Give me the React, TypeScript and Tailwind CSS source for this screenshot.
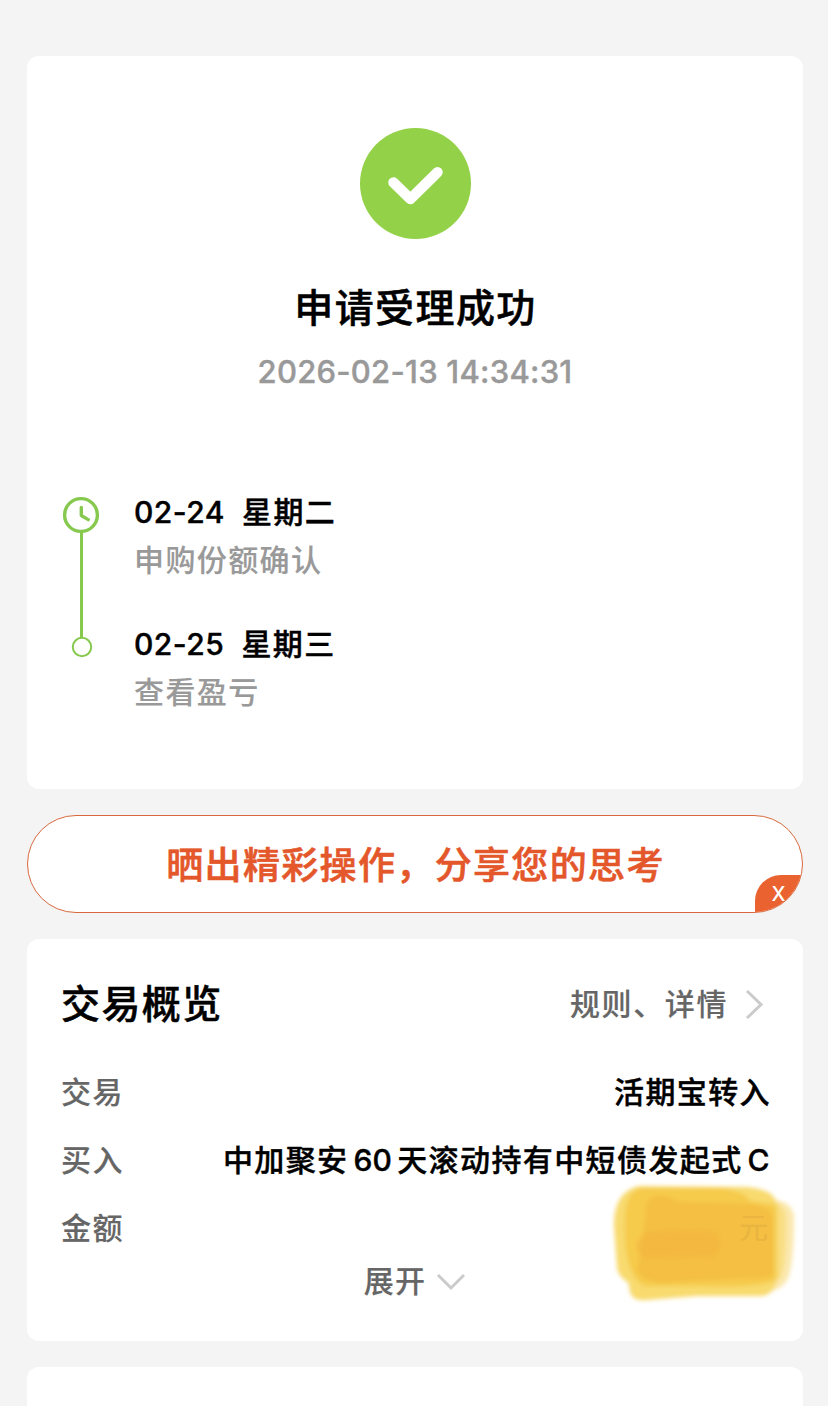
import type { ReactNode } from "react";

const steps = [
  { date: "02-24", day: "星期二", note: "申购份额确认" },
  { date: "02-25", day: "星期三", note: "查看盈亏" },
];

function SuccessIcon() {
  return (
    <svg className="block h-[112px] w-[112px]" viewBox="0 0 112 112" fill="none">
      <circle cx="56.5" cy="56.5" r="55.5" fill="#93d248" />
      <path d="M34.5 55.5 L51.4 72 L78.5 45.2" stroke="#fff" strokeWidth="10.5" strokeLinecap="round" strokeLinejoin="round" />
    </svg>
  );
}

function TimelineRail() {
  return (
    <svg className="block h-[164px] w-[40px] shrink-0" viewBox="0 0 40 164" fill="none" stroke="#86c94e">
      <circle cx="20" cy="20" r="16.4" strokeWidth="3.4" />
      <path d="M20.3 12.5 V20.5 L27.2 24.6" strokeWidth="3.4" strokeLinecap="round" strokeLinejoin="round" />
      <path d="M20.5 37 V143" strokeWidth="3" />
      <circle cx="21" cy="152" r="9.2" strokeWidth="2" />
    </svg>
  );
}

function Row({ label, children }: { label: string; children?: ReactNode }) {
  return (
    <div className="-mr-[2px] flex h-[68px] items-center justify-between text-[30px] tracking-[1.4px]">
      <span className="text-[#666]">{label}</span>
      <span className="text-black">{children}</span>
    </div>
  );
}

function Scribble() {
  return (
    <svg className="absolute top-[238px] left-[575px] h-[140px] w-[210px]" viewBox="0 0 210 140">
      <defs>
        <filter id="soft" x="-10%" y="-10%" width="120%" height="120%">
          <feGaussianBlur stdDeviation="2.2" />
        </filter>
      </defs>
      <g filter="url(#soft)">
        <path d="M158 23 Q188 20 192 38 Q192 94 184 105 Q176 116 158 114Z" fill="#fbe8ae" />
        <path d="M158 22 Q181 22 184 38 Q185 90 178 101 Q170 112 158 112Z" fill="#f9df86" />
        <path d="M25 97 L28 115 Q31 125 45 123 L95 119 L160 119 Q175 117 174 98Z" fill="#f8da6e" />
        <path d="M37 9 L146 10 Q172 13 174 25 L177 35 V100 Q169 111 145 111 L44 111 Q18 107 15 91 L12 50 Q11 15 37 9Z" fill="#f8da6e" />
        <path d="M40 11 L118 11 Q144 15 148 24 L174 28 V103 Q158 111 100 109 L43 109 Q22 99 23 48 Q22 14 40 11Z" fill="#f6ca4b" />
        <path d="M45 24 Q58 13 76 25 L145 27 Q170 28 171 42 V96 Q171 102 149 101 L72 105 Q46 109 35 94 Q42 60 45 24Z" fill="#f4bf42" />
        <path d="M43 56 Q82 51 114 55 Q123 68 112 79 L43 81 Q26 70 43 56Z" fill="#f3b43f" opacity=".6" />
      </g>
      <text x="137" y="62" fontSize="29" fill="#e9b440" className="font-normal">元</text>
    </svg>
  );
}

export default function App() {
  return (
    <div className="flex h-[1406px] w-[828px] flex-col gap-[26px] overflow-hidden bg-[#f4f4f4] pt-[56px] pr-[25px] pl-[27px] font-['Inter','Noto_Sans_CJK_SC',sans-serif] font-medium whitespace-nowrap [-webkit-text-stroke:0.15px_currentColor]">
      <section className="flex h-[733px] shrink-0 flex-col rounded-[12px] bg-white">
        <div className="flex flex-col items-center pt-[71px]">
          <SuccessIcon />
          <h1 className="mt-[39px] h-[60px] pl-[1px] text-[39px] leading-[60px] font-medium tracking-[1.4px] text-black [-webkit-text-stroke:0.5px_currentColor]">申请受理成功</h1>
          <p className="mt-[11px] h-[46px] text-[31px] leading-[46px] tracking-[0.25px] text-[#999] [-webkit-text-stroke:0.4px_currentColor]">2026-02-13 14:34:31</p>
        </div>
        <div className="mt-[84px] flex pt-[16px] pl-[34px]">
          <TimelineRail />
          <ol className="ml-[33px] flex flex-col gap-[36px] text-[30px] tracking-[1.4px]">
            {steps.map((s) => (
              <li key={s.date} className="flex flex-col leading-[48px]">
                <div className="flex h-[48px] -translate-y-[7px] gap-[17px] text-black [-webkit-text-stroke:0.4px_currentColor]">
                  <span className="tracking-[0.5px]">{s.date}</span>
                  <span>{s.day}</span>
                </div>
                <span className="h-[48px] -translate-y-[7px] text-[#999]">{s.note}</span>
              </li>
            ))}
          </ol>
        </div>
      </section>

      <button className="relative flex h-[98px] shrink-0 items-center justify-center overflow-hidden rounded-full border border-[#d9683c] bg-white text-[37px] font-medium tracking-[1.35px] text-[#e4572b] [-webkit-text-stroke:0.6px_currentColor]">
        <span className="pt-[3px] pl-[1px]">晒出精彩操作，分享您的思考</span>
        <span className="absolute right-0 bottom-0 flex h-[37px] w-[47px] items-center justify-center rounded-tl-[26px] bg-[#ea622f] pt-[1px] text-[20px] tracking-normal text-white [-webkit-text-stroke:0px]">X</span>
      </button>

      <section className="relative h-[402px] shrink-0 rounded-[12px] bg-white px-[34px] pt-[35px]">
        <header className="flex h-[60px] items-center justify-between">
          <h2 className="text-[39px] font-medium tracking-[1.4px] text-black [-webkit-text-stroke:0.5px_currentColor]">交易概览</h2>
          <a className="flex items-center pr-[3px] text-[30px] tracking-[1.6px] text-[#666]">
            规则、详情
            <svg className="ml-[16px] h-[32px] w-[22px]" viewBox="0 0 22 32" fill="none">
              <path d="M3 3 L17 16.5 L3 30" stroke="#cbcbcb" strokeWidth="3" />
            </svg>
          </a>
        </header>
        <div className="pt-[24px]">
          <Row label="交易"><span className="[-webkit-text-stroke:0.4px_currentColor]">活期宝转入</span></Row>
          <Row label="买入">
            <span className="flex [-webkit-text-stroke:0.4px_currentColor]"><span>中加聚安</span><span className="mr-[5px] ml-[5px] tracking-[0.2px]">60</span><span>天滚动持有中短债发起式</span><span className="ml-[5px]">C</span></span>
          </Row>
          <Row label="金额" />
        </div>
        <div className="-mt-px flex h-[40px] items-center justify-center text-[30px] tracking-[1.3px] text-[#666]">
          展开
          <svg className="mt-[2px] ml-[10px] h-[20px] w-[30px]" viewBox="0 0 30 20" fill="none">
            <path d="M2 3 L15 16 L28 3" stroke="#cbcbcb" strokeWidth="3" />
          </svg>
        </div>
        <Scribble />
      </section>

      <section className="h-[60px] shrink-0 rounded-t-[12px] bg-white" />
    </div>
  );
}
